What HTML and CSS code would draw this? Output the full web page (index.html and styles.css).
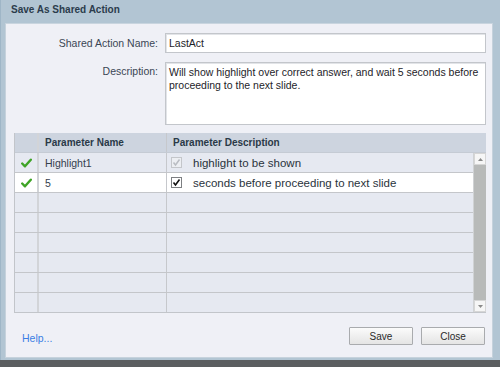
FILE: index.html
```html
<!DOCTYPE html>
<html>
<head>
<meta charset="utf-8">
<link rel="stylesheet" href="styles.css">
</head>
<body>
<div class="dialog">
  <div class="titlebar">Save As Shared Action</div>
  <div class="panel">
    <div class="form">
      <label class="lbl">Shared Action Name:</label>
      <div class="input">LastAct</div>
      <label class="lbl lbl-top">Description:</label>
      <div class="input textarea">Will show highlight over correct answer, and wait 5 seconds before proceeding to the next slide.</div>
    </div>
    <div class="table">
      <div class="thead">
        <div class="c1"></div>
        <div class="c2">Parameter Name</div>
        <div class="c3">Parameter Description</div>
      </div>
      <div class="tbody">
        <div class="rows">
          <div class="row">
            <div class="c1"><svg class="ok" width="11" height="10" viewBox="0 0 11 10"><path d="M1.2 5.5 L4 8.3 L9.8 1.7" fill="none" stroke="#3fa427" stroke-width="2.4" stroke-linecap="round" stroke-linejoin="round"/></svg></div>
            <div class="c2 name">Highlight1</div>
            <div class="c3"><span class="cb cb-dis"><svg width="9" height="9" viewBox="0 0 9 9"><path d="M1.5 4.5 L3.5 7 L7.5 1.5" fill="none" stroke="#b9bcc2" stroke-width="1.5"/></svg></span><span class="desc">highlight to be shown</span></div>
          </div>
          <div class="row sel">
            <div class="c1"><svg class="ok" width="11" height="10" viewBox="0 0 11 10"><path d="M1.2 5.5 L4 8.3 L9.8 1.7" fill="none" stroke="#3fa427" stroke-width="2.4" stroke-linecap="round" stroke-linejoin="round"/></svg></div>
            <div class="c2 name">5</div>
            <div class="c3"><span class="cb"><svg width="9" height="9" viewBox="0 0 9 9"><path d="M1.5 4.5 L3.5 7 L7.5 1.5" fill="none" stroke="#111" stroke-width="1.6"/></svg></span><span class="desc">seconds before proceeding to next slide</span></div>
          </div>
          <div class="row"><div class="c1"></div><div class="c2"></div><div class="c3"></div></div>
          <div class="row"><div class="c1"></div><div class="c2"></div><div class="c3"></div></div>
          <div class="row"><div class="c1"></div><div class="c2"></div><div class="c3"></div></div>
          <div class="row"><div class="c1"></div><div class="c2"></div><div class="c3"></div></div>
          <div class="row"><div class="c1"></div><div class="c2"></div><div class="c3"></div></div>
          <div class="row last"><div class="c1"></div><div class="c2"></div><div class="c3"></div></div>
        </div>
        <div class="scrollbar">
          <div class="arrow"><svg width="5" height="3" viewBox="0 0 5 3"><path d="M0 3 L2.5 0 L5 3Z" fill="#8a8a8a"/></svg></div>
          <div class="thumb"></div>
          <div class="arrow"><svg width="5" height="3" viewBox="0 0 5 3"><path d="M0 0 L2.5 3 L5 0Z" fill="#8a8a8a"/></svg></div>
        </div>
      </div>
    </div>
    <div class="footer">
      <a class="help">Help...</a>
      <div class="buttons">
        <button class="btn">Save</button>
        <button class="btn">Close</button>
      </div>
    </div>
  </div>
</div>
</body>
</html>
```

FILE: styles.css
```css
html, body {
  margin: 0;
  padding: 0;
}
body {
  width: 500px;
  height: 367px;
  background: #5b5e60;
  font-family: "Liberation Sans", Arial, sans-serif;
  font-size: 10.5px;
  color: #2c3946;
  overflow: hidden;
}
.dialog {
  height: 360px;
  background: #b2c5d3;
  border-left: 1px solid #9fb6c7;
  box-sizing: border-box;
  display: flex;
  flex-direction: column;
}
.titlebar {
  height: 23px;
  line-height: 20px;
  padding-left: 10px;
  font-weight: bold;
  font-size: 10px;
  color: #2b3c4c;
}
.panel {
  margin: 0 7px 0 4px;
  height: 335px;
  box-sizing: border-box;
  background: #eff0f6;
  border: 1px solid #c6d2dc;
  border-top-color: #c9d5df;
  padding: 9px 6px 0 8px;
  display: flex;
  flex-direction: column;
}
.form {
  display: grid;
  grid-template-columns: 144px 1fr;
  column-gap: 7px;
  row-gap: 9px;
}
.lbl {
  text-align: right;
  align-self: center;
  color: #3a4654;
}
.lbl-top {
  align-self: start;
  padding-top: 3px;
}
.input {
  height: 20px;
  box-sizing: border-box;
  background: #fff;
  border: 1px solid #c3c6cb;
  box-shadow: inset 1px 1px 0 #e2e4e8;
  padding: 3px 3px;
  color: #1d2329;
  line-height: 13px;
}
.textarea {
  height: 63px;
  padding-top: 3px;
}
.table {
  margin-top: 8px;
  width: 471px;
  border-left: 1px solid #c2c5ca;
  border-bottom: 1px solid #c2c5ca;
  background: #e6e9f1;
}
.thead {
  display: grid;
  grid-template-columns: 24px 128px 1fr;
  height: 20px;
  background: #cdd4df;
  border-bottom: 1px solid #c5cbd4;
  box-sizing: border-box;
  font-weight: bold;
  font-size: 10px;
  color: #2a3947;
}
.thead > div, .row > div {
  display: flex;
  align-items: center;
  box-sizing: border-box;
}
.thead .c1, .row .c1 {
  border-right: 2px solid #d2d4d8;
  justify-content: center;
}
.thead .c2, .row .c2 {
  border-right: 1px solid #c6c8cc;
  padding-left: 6px;
}
.thead .c3 {
  padding-left: 6px;
}
.tbody {
  display: flex;
}
.rows {
  flex: 1;
}
.row {
  display: grid;
  grid-template-columns: 24px 128px 1fr;
  height: 20px;
  border-bottom: 1px solid #c4c6ca;
  box-sizing: border-box;
}
.row.last {
  height: 19px;
  border-bottom: none;
}
.row.sel {
  background: #fff;
}
.name {
  color: #34404d;
  font-size: 10.5px;
}
.row .c3 {
  padding-left: 4px;
}
.cb {
  width: 11px;
  height: 11px;
  box-sizing: border-box;
  border: 1px solid #7d7f82;
  background: #fff;
  display: flex;
  align-items: center;
  justify-content: center;
  margin-right: 11px;
}
.cb-dis {
  border-color: #c4c6ca;
  background: #eceef2;
}
.desc {
  color: #2a333c;
  font-size: 11.5px;
}
.scrollbar {
  width: 13px;
  background: #b8bab9;
  display: flex;
  flex-direction: column;
  justify-content: space-between;
  border-left: 1px solid #d0d2d4;
  box-sizing: border-box;
}
.arrow {
  height: 12px;
  background: #f6f6f6;
  border: 1px solid #d6d6d6;
  box-sizing: border-box;
  display: flex;
  align-items: center;
  justify-content: center;
}
.thumb {
  flex: 1;
}
.footer {
  display: flex;
  align-items: center;
  justify-content: space-between;
  margin-top: 14px;
  padding-left: 8px;
  width: 471px;
  box-sizing: border-box;
  height: 18px;
}
.help {
  color: #3a7ee4;
  font-size: 10.5px;
  margin-top: 4px;
}
.buttons {
  display: flex;
  gap: 8px;
}
.btn {
  width: 64px;
  height: 18px;
  padding: 0;
  font-family: "Liberation Sans", Arial, sans-serif;
  font-size: 10px;
  color: #2a2a2a;
  background: linear-gradient(#fbfbfb, #e4e4e4);
  border: 1px solid #a9abae;
  border-radius: 1px;
}
```
